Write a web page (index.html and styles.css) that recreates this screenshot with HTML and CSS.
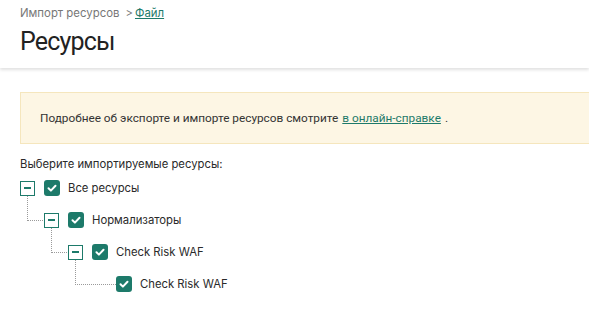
FILE: index.html
```html
<!DOCTYPE html>
<html lang="ru">
<head>
    <meta charset="UTF-8">
    <meta name="viewport" content="width=device-width, initial-scale=1.0">
    <title>Ресурсы</title>
    <link rel="stylesheet" href="styles.css">
</head>
<body>
    <header class="page-header">
        <nav class="breadcrumbs">
            <span class="crumb">Импорт ресурсов</span>
            <span class="crumb-sep">&gt;</span>
            <a class="crumb-link" href="#">Файл</a>
        </nav>
        <h1 class="page-title">Ресурсы</h1>
    </header>

    <main class="content">
        <div class="notice">
            Подробнее об экспорте и импорте ресурсов смотрите <a href="#">в онлайн-справке</a> .
        </div>

        <p class="tree-label">Выберите импортируемые ресурсы:</p>

        <ul class="tree">
            <li class="node">
                <div class="row">
                    <span class="toggler"></span>
                    <span class="check"><svg viewBox="0 0 16 16"><path d="M4.5 8.3l2.4 2.3 4.6-4.8" /></svg></span>
                    <span class="title">Все ресурсы</span>
                </div>
                <ul class="children">
                    <li class="node">
                        <div class="row">
                            <span class="toggler"></span>
                            <span class="check"><svg viewBox="0 0 16 16"><path d="M4.5 8.3l2.4 2.3 4.6-4.8" /></svg></span>
                            <span class="title">Нормализаторы</span>
                        </div>
                        <ul class="children">
                            <li class="node">
                                <div class="row">
                                    <span class="toggler"></span>
                                    <span class="check"><svg viewBox="0 0 16 16"><path d="M4.5 8.3l2.4 2.3 4.6-4.8" /></svg></span>
                                    <span class="title">Check Risk WAF</span>
                                </div>
                                <ul class="children">
                                    <li class="node leaf">
                                        <div class="row">
                                            <span class="toggler"></span>
                                            <span class="check"><svg viewBox="0 0 16 16"><path d="M4.5 8.3l2.4 2.3 4.6-4.8" /></svg></span>
                                            <span class="title">Check Risk WAF</span>
                                        </div>
                                    </li>
                                </ul>
                            </li>
                        </ul>
                    </li>
                </ul>
            </li>
        </ul>
    </main>
</body>
</html>
```

FILE: styles.css
```css
/* === Base === */
:root {
    --green: #1d7a6a;
    --text: #2a2a2a;
    --muted: #777;
    --dots: #9a9a9a;
}

body {
    margin: 0;
    font-family: 'Inter', 'Noto Sans', sans-serif;
    color: var(--text);
    background: #fff;
    overflow: hidden;
}

/* === Header === */
.page-header {
    padding: 4px 20px 0;
    height: 64px;
    box-shadow: 0 2px 3px rgba(0, 0, 0, 0.12);
    position: relative;
}

.breadcrumbs {
    font-size: 11.4px;
    line-height: 18px;
    display: flex;
    align-items: center;
    color: var(--muted);
}

.crumb-sep {
    margin: 0 2px 0 6px;
}

.crumb-link {
    color: var(--green);
    text-decoration: underline;
}

.page-title {
    margin: 4px 0 0;
    font-family: 'Roboto', sans-serif;
    font-size: 25px;
    font-weight: 400;
    letter-spacing: -0.8px;
    line-height: 32px;
    color: #222;
}

/* === Content === */
.content {
    padding: 24px 20px 0;
}

.notice {
    margin-right: -40px;
    height: 50px;
    padding-left: 19px;
    display: flex;
    align-items: center;
    font-family: 'Roboto', sans-serif;
    font-size: 11.8px;
    color: #333;
    background: #fdf6e4;
    border: 1px solid #f5e6bd;
}

.notice a {
    color: var(--green);
    margin: 0 4px;
}

.tree-label {
    margin: 13px 0 1px;
    font-size: 11.3px;
    line-height: 14px;
}

/* === Tree === */
.tree,
.children {
    list-style: none;
    margin: 0;
    padding: 0;
}

.children {
    padding-left: 24px;
}

.node {
    position: relative;
}

.row {
    display: flex;
    align-items: center;
    height: 32px;
    font-size: 11.3px;
}

.toggler {
    width: 24px;
    flex: none;
    position: relative;
    height: 15px;
}

.node:not(.leaf) > .row > .toggler::before {
    content: "";
    position: absolute;
    left: 0;
    top: 0;
    width: 13px;
    height: 13px;
    border: 1px solid var(--green);
    background: #fff;
    z-index: 1;
}

.node:not(.leaf) > .row > .toggler::after {
    content: "";
    position: absolute;
    left: 4px;
    top: 6px;
    width: 7px;
    height: 2px;
    background: var(--green);
    z-index: 2;
}

/* connector: vertical from parent toggler, horizontal into child */
.children > .node::before {
    content: "";
    position: absolute;
    left: -17px;
    top: -9px;
    height: 25px;
    width: 17px;
    border-left: 1px dotted var(--dots);
    border-bottom: 1px dotted var(--dots);
}

.children > .leaf::before {
    width: 40px;
}

.check {
    width: 16px;
    height: 16px;
    flex: none;
    border-radius: 3px;
    background: var(--green);
    display: flex;
}

.check svg {
    width: 16px;
    height: 16px;
    fill: none;
    stroke: #fff;
    stroke-width: 2;
    stroke-linecap: round;
    stroke-linejoin: round;
}

.title {
    margin-left: 8px;
}
```
